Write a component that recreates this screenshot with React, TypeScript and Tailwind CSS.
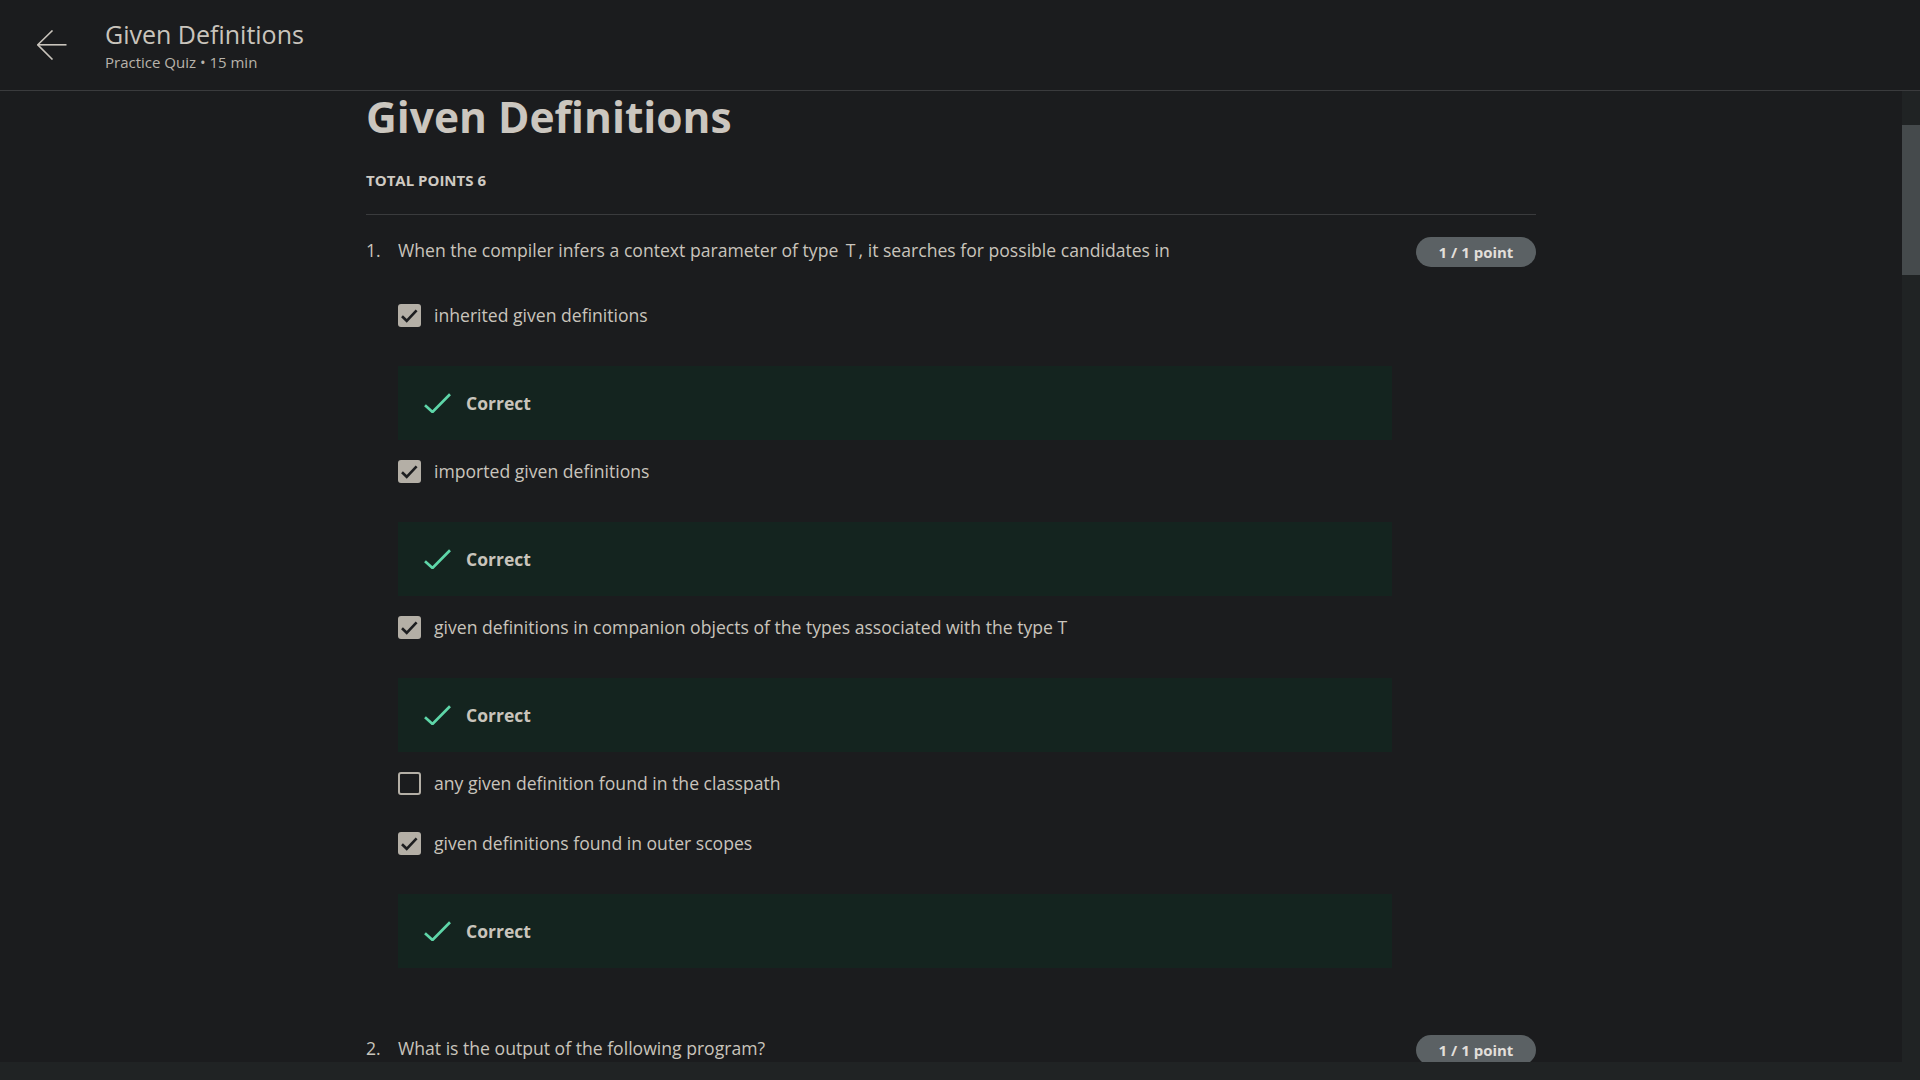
import React from 'react';

type Option = { label: string; checked: boolean; correct?: boolean };

const options: Option[] = [
  { label: 'inherited given definitions', checked: true, correct: true },
  { label: 'imported given definitions', checked: true, correct: true },
  { label: 'given definitions in companion objects of the types associated with the type T', checked: true, correct: true },
  { label: 'any given definition found in the classpath', checked: false },
  { label: 'given definitions found in outer scopes', checked: true, correct: true },
];

function BackArrow() {
  return (
    <svg width="30" height="30" viewBox="0 0 30 30" fill="none" stroke="#c9c4bc" strokeWidth="1.6">
      <path d="M15.5 0.5 L0.8 14.8 L15.5 29.5" />
      <path d="M0.8 14.8 H29.5" />
    </svg>
  );
}

function Checkbox({ checked }: { checked: boolean }) {
  if (!checked) {
    return <div className="w-[23px] h-[23px] rounded-[3px] border-2 border-[#b4afa6] shrink-0" />;
  }
  return (
    <div className="w-[23px] h-[23px] rounded-[3px] bg-[#b4afa6] shrink-0">
      <svg width="23" height="23" viewBox="0 0 23 23" fill="none" stroke="#1d1e20" strokeWidth="2.6" strokeLinejoin="miter">
        <path d="M4 12.3 L8.7 16.8 L18.6 6.3" />
      </svg>
    </div>
  );
}

function CorrectBox() {
  return (
    <div className="mt-[39px] mb-[19px] w-[994px] h-[74px] bg-[#14241f] flex items-center pl-[26px]">
      <svg width="27" height="20" viewBox="0 0 27 20" fill="none" stroke="#5ed6a8" strokeWidth="2.7">
        <path d="M1 12.3 L8.5 19 L26 1.3" />
      </svg>
      <span className="ml-[15px] text-[17.5px] font-bold text-[#c9c4bc]">Correct</span>
    </div>
  );
}

function PointBadge() {
  return (
    <div className="w-[120px] h-[30px] rounded-full bg-[#5b6164] shrink-0 flex items-center justify-center text-[15px] font-bold text-[#e2dfda]">
      1 / 1 point
    </div>
  );
}

export default function App() {
  return (
    <div className="h-screen flex flex-col bg-[#1b1c1e] text-[#c9c4bc] overflow-hidden" style={{ fontFamily: '"Open Sans", sans-serif' }}>
      <header className="h-[91px] shrink-0 border-b border-[#3a3b3d] flex items-center pl-[37px]">
        <BackArrow />
        <div className="ml-[38px] flex flex-col">
          <h2 className="text-[25px] leading-[30px] text-[#c9c4bc]">Given Definitions</h2>
          <p className="mt-[3px] text-[15px] leading-5 text-[#b8b3ab]">Practice Quiz • 15 min</p>
        </div>
      </header>

      <div className="flex-1 flex min-h-0">
        <main className="flex-1 overflow-hidden">
          <div className="w-[1170px] mx-auto pt-[2px]">
            <h1 className="text-[42.5px] leading-[48px] font-bold text-[#cbc6bf]">Given Definitions</h1>
            <p className="mt-[29px] text-[15px] leading-5 font-bold text-[#cfcac3]">TOTAL POINTS 6</p>
            <div className="mt-[24px] h-px bg-[#3a3b3d]" />

            <div className="mt-[22px] flex items-start">
              <div className="flex-1 flex pt-[1px] text-[17.6px] leading-6">
                <span className="w-[32px] shrink-0">1.</span>
                <span>
                  When the compiler infers a context parameter of type <span className="px-[3px]">T</span>, it searches for possible candidates in
                </span>
              </div>
              <PointBadge />
            </div>

            <div className="mt-[36px] pl-[32px] flex flex-col">
              {options.map((o, i) => (
                <div key={i}>
                  <div className="h-6 flex items-center">
                    <Checkbox checked={o.checked} />
                    <span className="ml-[13px] text-[17.6px] leading-6">{o.label}</span>
                  </div>
                  {o.correct ? <CorrectBox /> : <div className="h-[36px]" />}
                </div>
              ))}
            </div>

            <div className="mt-[48px] flex items-start">
              <div className="flex-1 flex pt-[1px] text-[17.6px] leading-6">
                <span className="w-[32px] shrink-0">2.</span>
                <span>What is the output of the following program?</span>
              </div>
              <PointBadge />
            </div>
          </div>
        </main>
        <div className="w-[18px] shrink-0 bg-[#202324] pt-[34px]">
          <div className="h-[150px] bg-[#454a4c]" />
        </div>
      </div>
      <div className="h-[18px] shrink-0 bg-[#202324]" />
    </div>
  );
}
